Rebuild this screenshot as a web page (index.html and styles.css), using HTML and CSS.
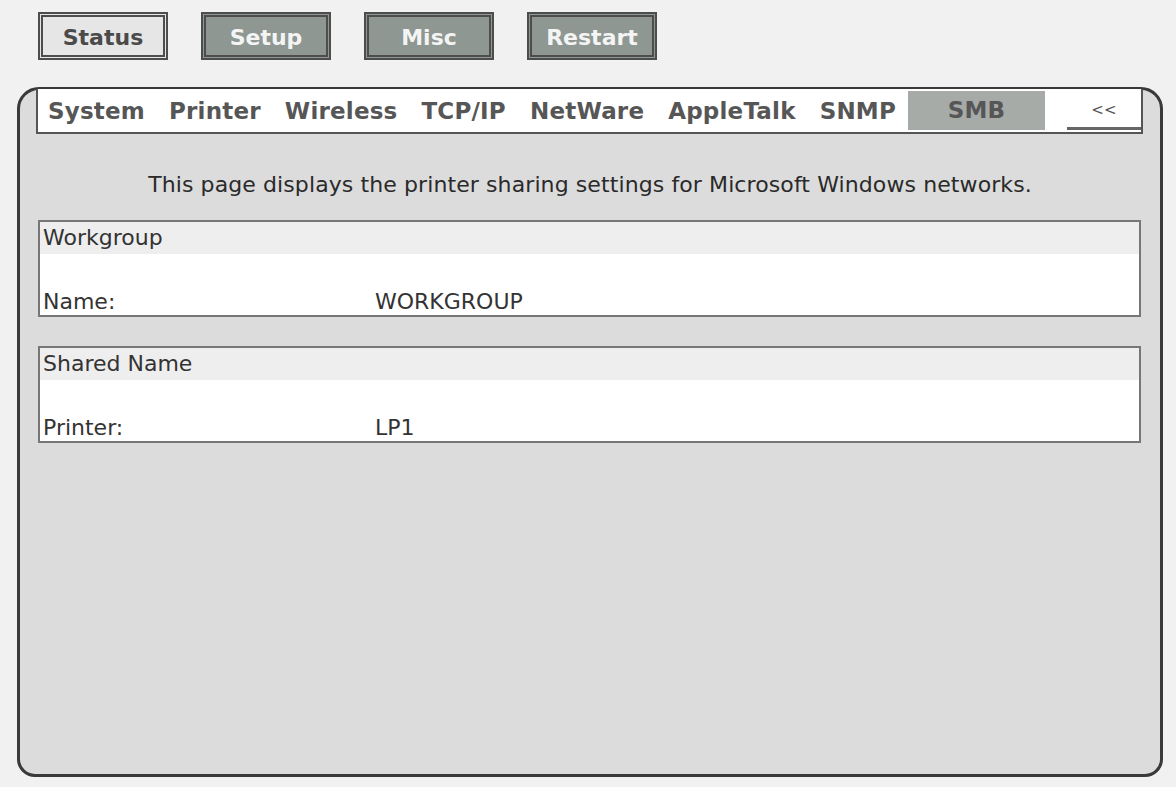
FILE: index.html
```html
<!DOCTYPE html>
<html lang="en">
<head>
    <meta charset="UTF-8">
    <title>SMB Settings</title>
    <link rel="stylesheet" href="styles.css">
</head>
<body>
    <div class="topnav">
        <a class="nav-btn current">Status</a>
        <a class="nav-btn">Setup</a>
        <a class="nav-btn">Misc</a>
        <a class="nav-btn">Restart</a>
    </div>

    <div class="panel">
        <div class="tabbar">
            <span class="tab">System</span>
            <span class="tab">Printer</span>
            <span class="tab">Wireless</span>
            <span class="tab">TCP/IP</span>
            <span class="tab">NetWare</span>
            <span class="tab">AppleTalk</span>
            <span class="tab">SNMP</span>
            <span class="tab active">SMB</span>
            <span class="tab back">&lt;&lt;</span>
        </div>

        <p class="intro">This page displays the printer sharing settings for Microsoft Windows networks.</p>

        <div class="section">
            <div class="section-head">Workgroup</div>
            <div class="section-row">
                <span class="label">Name:</span>
                <span class="value">WORKGROUP</span>
            </div>
        </div>

        <div class="section">
            <div class="section-head">Shared Name</div>
            <div class="section-row">
                <span class="label">Printer:</span>
                <span class="value">LP1</span>
            </div>
        </div>
    </div>
</body>
</html>
```

FILE: styles.css
```css
body {
    margin: 0;
    background: #f1f1f1;
    font-family: "DejaVu Sans", Verdana, sans-serif;
    color: #333;
}

.topnav {
    display: flex;
    gap: 33px;
    padding: 12px 0 0 38px;
}

.nav-btn {
    box-sizing: border-box;
    width: 130px;
    height: 48px;
    border: 5px double #4d4d4d;
    background: #8e9792;
    color: #f4f4f4;
    font-weight: bold;
    font-size: 22px;
    line-height: 42px;
    text-align: center;
}

.nav-btn.current {
    background: #e6e6e6;
    color: #4a4a4a;
}

.panel {
    box-sizing: border-box;
    width: 1146px;
    height: 690px;
    margin: 27px 0 0 17px;
    border: 3px solid #3a3a3a;
    border-radius: 22px 22px 18px 18px;
    background: #dcdcdc;
}

.tabbar {
    box-sizing: border-box;
    display: flex;
    align-items: center;
    height: 45px;
    margin: -1px 17px 0 16px;
    padding: 0 0 0 10px;
    background: #fff;
    border: 2px solid #555;
    border-top: none;
}

.tab {
    padding: 0 24px 0 0;
    font-size: 23px;
    font-weight: bold;
    letter-spacing: 0.2px;
    color: #565656;
}

.tab.active {
    box-sizing: border-box;
    width: 137px;
    height: 39px;
    margin: 0 0 0 -12px;
    padding: 0;
    line-height: 39px;
    text-align: center;
    background: #a6aba8;
}

.tab.back {
    box-sizing: border-box;
    width: 74px;
    height: 38px;
    margin-left: auto;
    padding: 0;
    line-height: 36px;
    text-align: center;
    font-size: 15px;
    font-weight: normal;
    border-bottom: 3px solid #666;
}

.intro {
    margin: 0;
    padding: 38px 0 22px;
    line-height: 26px;
    font-size: 22px;
    letter-spacing: 0.1px;
    text-align: center;
    color: #2a2a2a;
}

.section {
    margin: 0 19px 29px 18px;
    border: 2px solid #777;
    background: #fff;
}

.section-head {
    height: 32px;
    padding-left: 3px;
    line-height: 32px;
    font-size: 22px;
    background: #eeeeee;
}

.section-row {
    display: flex;
    height: 61px;
    padding: 36px 0 0 3px;
    box-sizing: border-box;
    font-size: 22px;
    line-height: 24px;
}

.label {
    width: 332px;
}
```
